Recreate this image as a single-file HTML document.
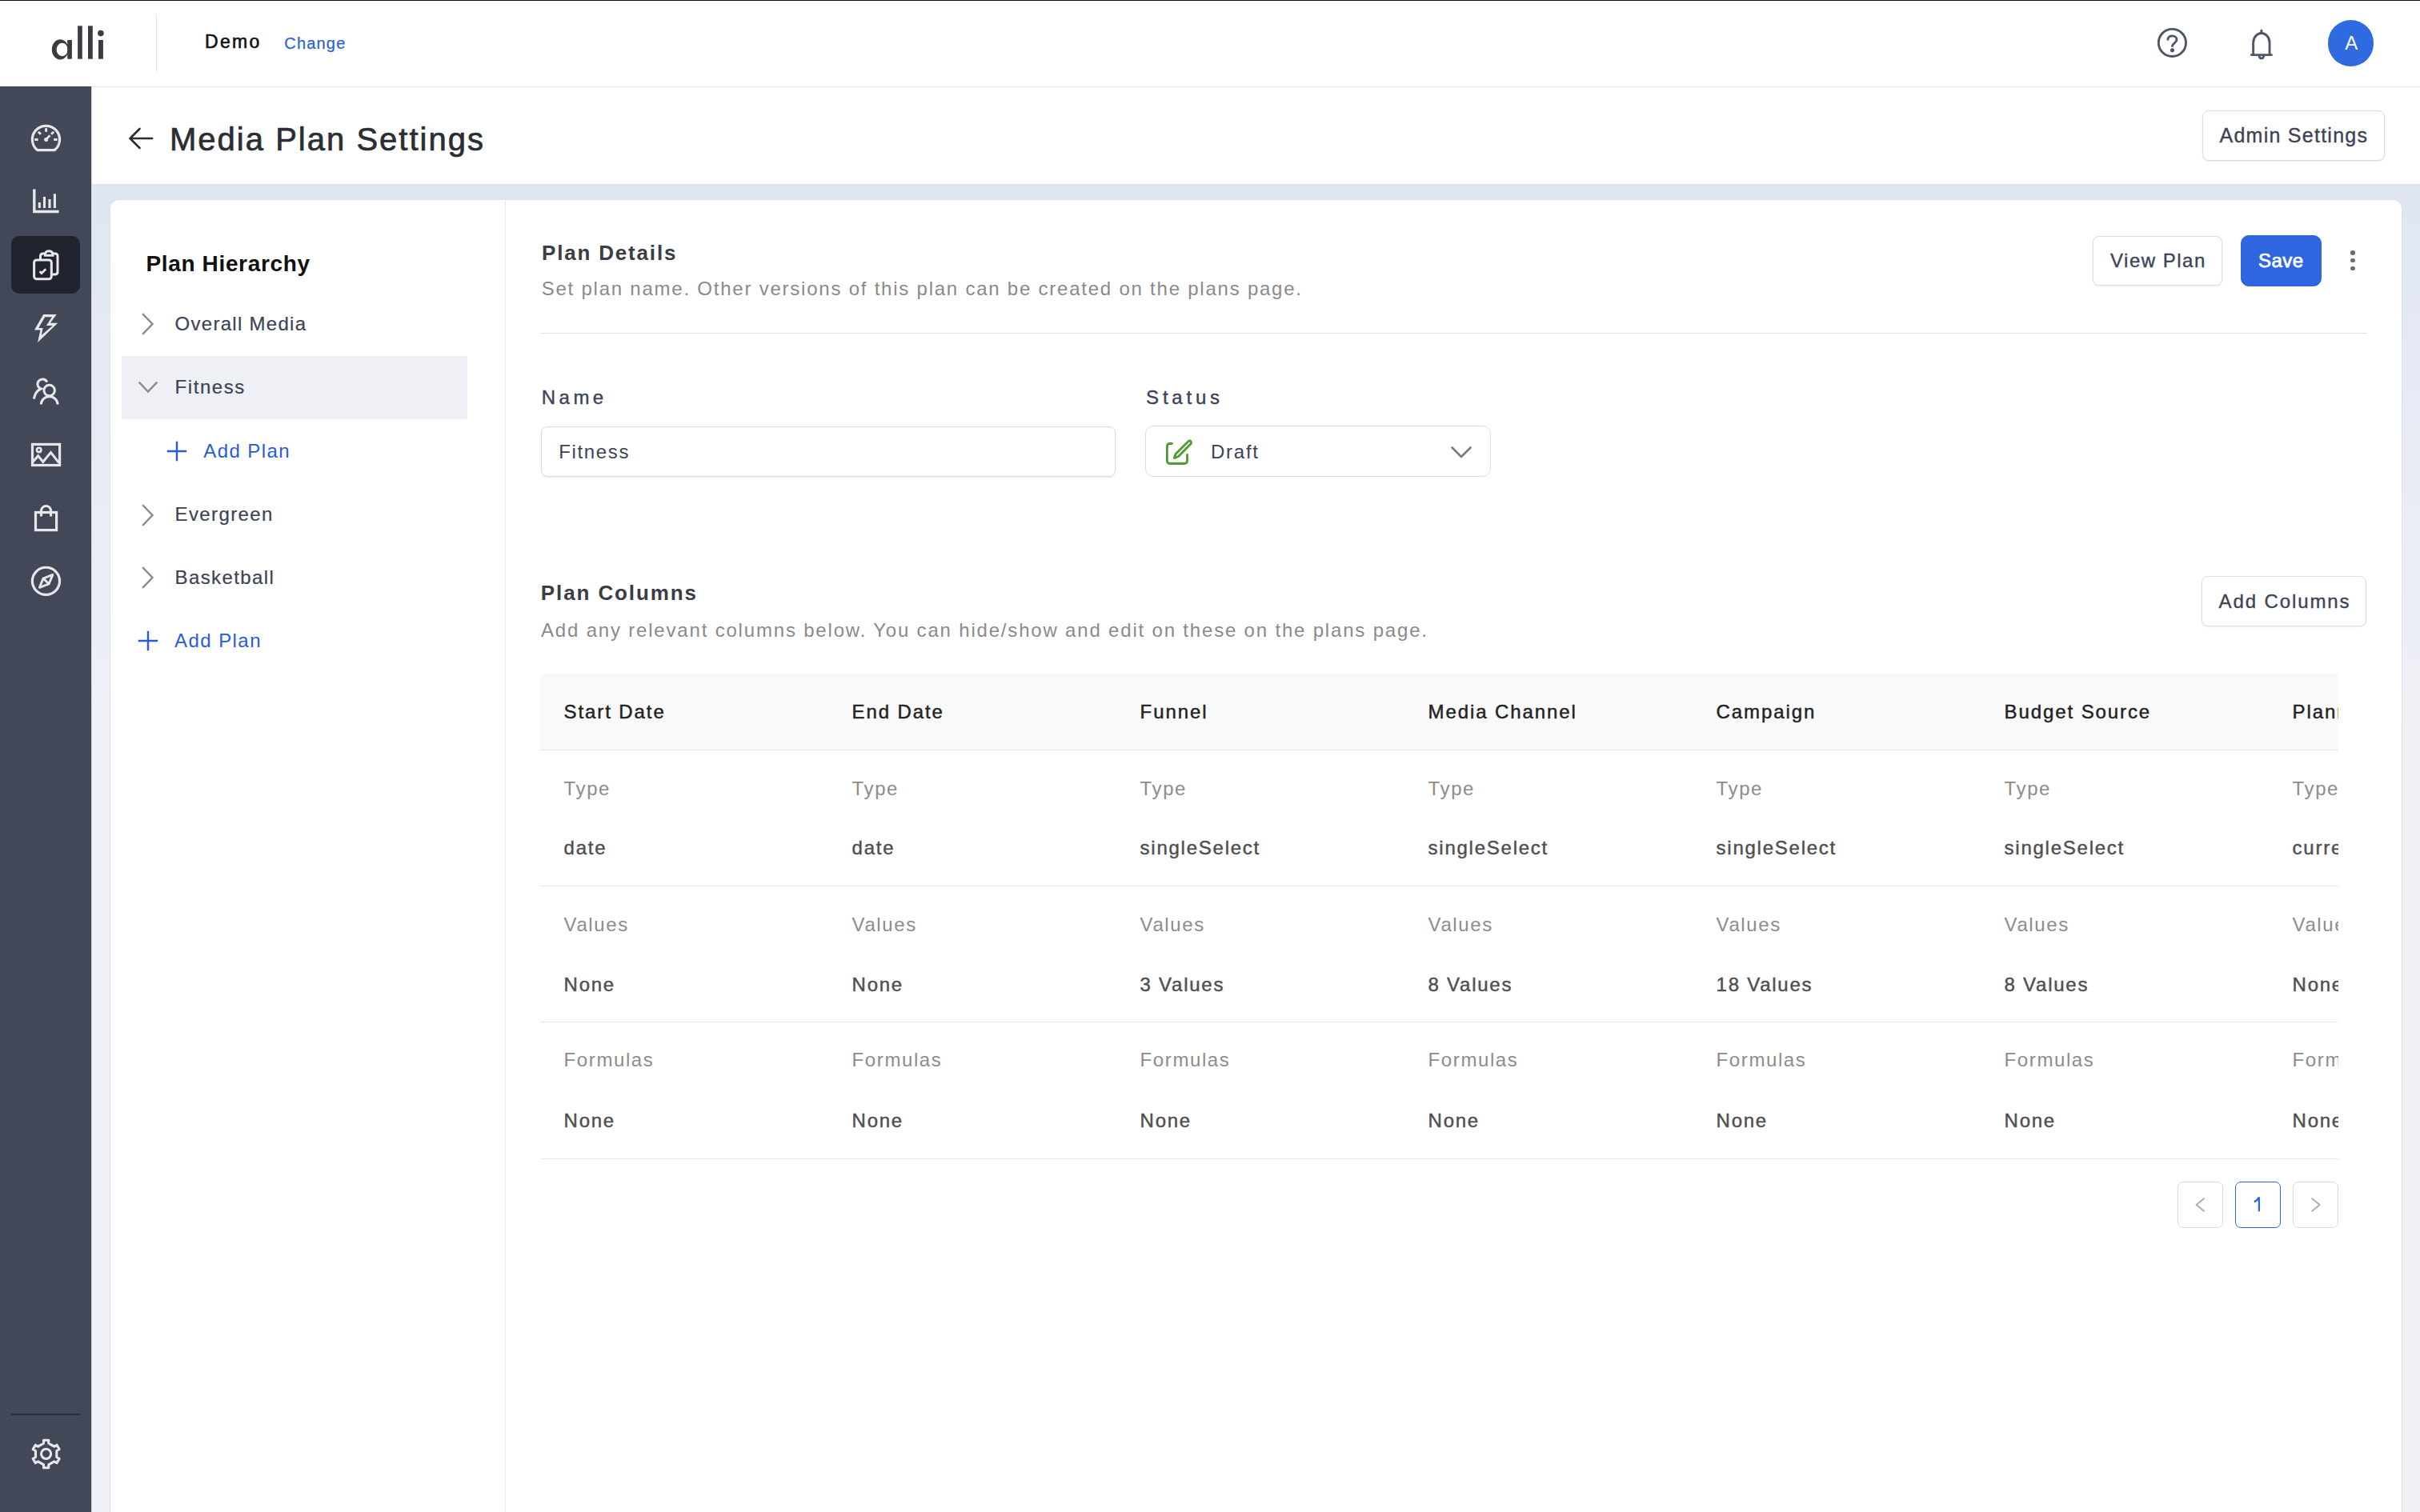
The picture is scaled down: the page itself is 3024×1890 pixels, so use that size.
<!DOCTYPE html><html><head><meta charset="utf-8"><style>
*{box-sizing:border-box;margin:0;padding:0}
html,body{width:3024px;height:1890px;overflow:hidden;background:#fff;font-family:"Liberation Sans",sans-serif}
.t{position:absolute;white-space:nowrap}
.abs{position:absolute}
svg{position:absolute;overflow:visible}
</style></head><body><div class="abs" style="left:114px;top:231px;width:2910px;height:1659px;background:linear-gradient(#dfe6f2 0px,#e6eaf4 250px,#eff1f6 700px,#eff1f6 1660px)"></div>
<div class="abs" style="left:0;top:0;width:3024px;height:109px;background:#fff;border-bottom:1px solid #e6e6e8;box-shadow:0 1px 3px rgba(0,0,0,0.05)"></div>
<div class="abs" style="left:0;top:0;width:3024px;height:1px;background:#111"></div>
<div class="abs" style="left:195px;top:18px;width:1px;height:72px;background:#e3e3e3"></div>
<div class="abs" style="left:114px;top:109px;width:2910px;height:122px;background:#fff;border-bottom:1px solid #e4e6ea"></div>
<div class="abs" style="left:0;top:108px;width:114px;height:1782px;background:#434859"></div>
<div class="abs" style="left:14px;top:295px;width:86px;height:72px;border-radius:10px;background:#21242f"></div>
<div class="abs" style="left:14px;top:1767px;width:86px;height:1.5px;background:#2c2f3b"></div>
<div class="abs" style="left:114px;top:108px;width:1px;height:1782px;background:#d5d7dc"></div>
<div class="abs" style="left:136.5px;top:249px;width:2865px;height:1700px;background:#fff;border:1px solid #dfe1e5;border-radius:12px"></div>
<div class="abs" style="left:631px;top:251px;width:1px;height:1639px;background:#e8e9ec"></div>
<div class="abs" style="left:152px;top:445px;width:432px;height:79px;background:#eff0f5"></div>
<div class="t" style="left:255.90px;top:41.43px;font-size:23px;line-height:23px;color:#111;letter-spacing:2.383px;-webkit-text-stroke:0.6px #111;">Demo</div>
<div class="t" style="left:355.30px;top:43.97px;font-size:20px;line-height:20px;color:#2b63d9;letter-spacing:1.190px;-webkit-text-stroke:0.25px #2b63d9;">Change</div>
<div class="t" style="left:212.00px;top:154.14px;font-size:40px;line-height:40px;color:#2b2d33;letter-spacing:2.014px;-webkit-text-stroke:0.7px #2b2d33;">Media Plan Settings</div>
<div class="t" style="left:182.40px;top:316.30px;font-size:28px;line-height:28px;color:#111;letter-spacing:0.654px;font-weight:700;">Plan Hierarchy</div>
<div class="t" style="left:218.50px;top:392.98px;font-size:24px;line-height:24px;color:#3c4257;letter-spacing:1.287px;-webkit-text-stroke:0.2px #3c4257;">Overall Media</div>
<div class="t" style="left:218.50px;top:471.68px;font-size:24px;line-height:24px;color:#3c4257;letter-spacing:1.575px;-webkit-text-stroke:0.2px #3c4257;">Fitness</div>
<div class="t" style="left:218.50px;top:630.98px;font-size:24px;line-height:24px;color:#3c4257;letter-spacing:1.400px;-webkit-text-stroke:0.2px #3c4257;">Evergreen</div>
<div class="t" style="left:218.50px;top:709.88px;font-size:24px;line-height:24px;color:#3c4257;letter-spacing:1.400px;-webkit-text-stroke:0.2px #3c4257;">Basketball</div>
<div class="t" style="left:254.30px;top:552.08px;font-size:24px;line-height:24px;color:#2a5bd7;letter-spacing:1.400px;">Add Plan</div>
<div class="t" style="left:218.00px;top:788.98px;font-size:24px;line-height:24px;color:#2a5bd7;letter-spacing:1.443px;">Add Plan</div>
<div class="t" style="left:677.00px;top:302.99px;font-size:26px;line-height:26px;color:#3a3d45;letter-spacing:1.818px;font-weight:700;">Plan Details</div>
<div class="t" style="left:676.70px;top:349.48px;font-size:24px;line-height:24px;color:#8a8a8a;letter-spacing:1.771px;">Set plan name. Other versions of this plan can be created on the plans page.</div>
<div class="t" style="left:676.80px;top:485.48px;font-size:24px;line-height:24px;color:#3c4257;letter-spacing:4.467px;-webkit-text-stroke:0.4px #3c4257;">Name</div>
<div class="t" style="left:1432.10px;top:484.98px;font-size:24px;line-height:24px;color:#3c4257;letter-spacing:4.790px;-webkit-text-stroke:0.4px #3c4257;">Status</div>
<div class="t" style="left:675.80px;top:727.99px;font-size:26px;line-height:26px;color:#3a3d45;letter-spacing:1.895px;font-weight:700;">Plan Columns</div>
<div class="t" style="left:676.00px;top:776.18px;font-size:24px;line-height:24px;color:#8a8a8a;letter-spacing:1.815px;">Add any relevant columns below. You can hide/show and edit on these on the plans page.</div>
<svg style="left:0;top:0" width="200" height="100" viewBox="0 0 200 100"><path fill="#3b3c41" fill-rule="evenodd" d="M75.2 49.3 A10.4 12.55 0 1 0 75.2 74.4 A10.4 12.55 0 1 0 75.2 49.3 Z M77.7 53.8 A7.1 8.2 0 1 1 77.7 70.2 A7.1 8.2 0 1 1 77.7 53.8 Z"/><rect x="84.2" y="50" width="5.7" height="23.7" fill="#3b3c41"/><rect x="97.1" y="32.3" width="5.7" height="41.4" fill="#3b3c41"/><rect x="110" y="32.3" width="5.8" height="41.4" fill="#3b3c41"/><rect x="123" y="50" width="5.9" height="23.7" fill="#3b3c41"/><circle cx="125.9" cy="41.6" r="3.8" fill="#3b3c41"/></svg>
<svg style="left:2690px;top:25px" width="160" height="60" viewBox="0 0 160 60" fill="none" stroke="#50566a" stroke-width="2.9" stroke-linecap="round" stroke-linejoin="round"><circle cx="24.4" cy="28.45" r="17.1"/><path d="M18.9 24.3 C19.3 21.2 21.6 19.9 24.5 19.9 C27.8 19.9 30 21.9 30 24.6 C30 28.5 24.6 29 24.5 32.6"/><circle cx="24.5" cy="37.7" r="1.1" fill="#50566a"/><path d="M125.65 43.6 L125.65 28.5 A10.2 12 0 0 1 146.05 28.5 L146.05 43.6"/><path d="M123.4 43.6 L148.4 43.6"/><path d="M133.2 45.2 A2.7 2.7 0 0 0 138.6 45.2"/><path d="M135.9 13.2 L135.9 16.4"/></svg>
<div class="abs" style="left:2908.5px;top:25px;width:57.5px;height:57.5px;border-radius:50%;background:#2f6ae0"></div>
<div class="t" style="left:2930.20px;top:41.88px;font-size:24px;line-height:24px;color:#fff;letter-spacing:0.000px;">A</div>
<svg style="left:150px;top:150px" width="50" height="50" viewBox="0 0 50 50" fill="none" stroke="#2b2d33" stroke-width="2.6" stroke-linecap="round" stroke-linejoin="round"><path d="M12.5 23 L40.2 23 M24.5 11 L12.5 23 L24.5 35"/></svg>
<div class="abs" style="left:2752px;top:137.5px;width:228px;height:63px;border-radius:8px;background:#fff;border:1px solid #dcdde1;box-shadow:0 1px 2px rgba(0,0,0,0.08);"></div>
<div class="t" style="left:2773.50px;top:156.64px;font-size:25px;line-height:25px;color:#3c4257;letter-spacing:1.258px;-webkit-text-stroke:0.35px #3c4257;">Admin Settings</div>
<div class="abs" style="left:2615px;top:294.5px;width:162px;height:62.5px;border-radius:8px;background:#fff;border:1px solid #dcdde1;box-shadow:0 1px 2px rgba(0,0,0,0.08);"></div>
<div class="t" style="left:2637.00px;top:313.88px;font-size:24px;line-height:24px;color:#3c4257;letter-spacing:1.500px;-webkit-text-stroke:0.35px #3c4257;">View Plan</div>
<div class="abs" style="left:2800px;top:294px;width:100.5px;height:63.5px;border-radius:10px;background:#2f66e0;border:1px solid #2f66e0;"></div>
<div class="t" style="left:2822.00px;top:313.88px;font-size:24px;line-height:24px;color:#fff;letter-spacing:0.433px;-webkit-text-stroke:0.75px #fff;">Save</div>
<div class="abs" style="left:2937.25px;top:313.09999999999997px;width:5.6px;height:5.6px;border-radius:50%;background:#6b6b6b"></div>
<div class="abs" style="left:2937.25px;top:322.9px;width:5.6px;height:5.6px;border-radius:50%;background:#6b6b6b"></div>
<div class="abs" style="left:2937.25px;top:332.7px;width:5.6px;height:5.6px;border-radius:50%;background:#6b6b6b"></div>
<div class="abs" style="left:675px;top:416px;width:2283px;height:1px;background:#e3e4e7"></div>
<div class="abs" style="left:676px;top:533px;width:718px;height:63px;border-radius:8px;background:#fff;border:1px solid #dcdcdf;box-shadow:0 1px 2px rgba(0,0,0,0.08);"></div>
<div class="t" style="left:698.20px;top:553.08px;font-size:24px;line-height:24px;color:#3c4257;letter-spacing:1.642px;">Fitness</div>
<div class="abs" style="left:1431.3px;top:532.2px;width:431.4px;height:64.3px;border-radius:10px;background:#fff;border:1px solid #dcdcdf;"></div>
<div class="t" style="left:1513.00px;top:552.88px;font-size:24px;line-height:24px;color:#3c4257;letter-spacing:1.750px;">Draft</div>
<svg style="left:1450px;top:545px" width="45" height="40" viewBox="0 0 45 40" fill="none" stroke="#4a9e2f" stroke-width="2.8" stroke-linecap="round" stroke-linejoin="round"><path d="M14.5 9.5 L12.2 9.5 Q8.4 9.5 8.4 13.3 L8.4 30.7 Q8.4 34.5 12.2 34.5 L29.7 34.5 Q33.5 34.5 33.5 30.7 L33.5 23.5"/><path d="M35.4 6.2 Q37.6 5.3 38.3 7.5 Q38.9 9.4 37.3 10.6 L22.6 25.5 L17.2 27.6 L19.2 22.2 Z"/></svg>
<svg style="left:1805px;top:550px" width="40" height="30" viewBox="0 0 40 30" fill="none" stroke="#7a7a7a" stroke-width="2.6" stroke-linecap="round" stroke-linejoin="round"><path d="M9.5 9.5 L21 21 L32.5 9.5"/></svg>
<div class="abs" style="left:2751px;top:719.6px;width:206px;height:63px;border-radius:8px;background:#fff;border:1px solid #dcdde1;box-shadow:0 1px 2px rgba(0,0,0,0.08);"></div>
<div class="t" style="left:2772.60px;top:740.08px;font-size:24px;line-height:24px;color:#3c4257;letter-spacing:1.885px;-webkit-text-stroke:0.35px #3c4257;">Add Columns</div>
<svg style="left:175px;top:389.1px" width="30" height="40" viewBox="0 0 30 40" fill="none" stroke="#8a8a8a" stroke-width="2.4" stroke-linecap="square"><path d="M4 4 L15.5 16 L4 28"/></svg>
<svg style="left:175px;top:627.7px" width="30" height="40" viewBox="0 0 30 40" fill="none" stroke="#8a8a8a" stroke-width="2.4" stroke-linecap="square"><path d="M4 4 L15.5 16 L4 28"/></svg>
<svg style="left:175px;top:706.2px" width="30" height="40" viewBox="0 0 30 40" fill="none" stroke="#8a8a8a" stroke-width="2.4" stroke-linecap="square"><path d="M4 4 L15.5 16 L4 28"/></svg>
<svg style="left:170px;top:470px" width="40" height="30" viewBox="0 0 40 30" fill="none" stroke="#8a8a8a" stroke-width="2.4" stroke-linecap="square"><path d="M4.5 8.5 L15 19.5 L25.5 8.5"/></svg>
<svg style="left:205.9px;top:548.8px" width="30" height="30" viewBox="0 0 30 30" fill="none" stroke="#2a5bd7" stroke-width="2.4"><path d="M15 2.8 L15 27.2 M2.8 15 L27.2 15"/></svg>
<svg style="left:169.9px;top:785.8px" width="30" height="30" viewBox="0 0 30 30" fill="none" stroke="#2a5bd7" stroke-width="2.4"><path d="M15 2.8 L15 27.2 M2.8 15 L27.2 15"/></svg>
<div class="abs" style="left:675px;top:842px;width:2247px;height:96px;background:#f9f9f9;border-radius:6px 0 0 0;border-bottom:1px solid #e5e5e5"></div>
<div class="abs" style="left:675px;top:1107px;width:2247px;height:1px;background:#e8e8e8"></div>
<div class="abs" style="left:675px;top:1277px;width:2247px;height:1px;background:#e8e8e8"></div>
<div class="abs" style="left:675px;top:1448px;width:2247px;height:1px;background:#e8e8e8"></div>
<div class="abs" style="left:675px;top:840px;width:2247px;height:620px;overflow:hidden"><div class="t" style="margin-left:-675px;margin-top:-840px;left:704.60px;top:877.68px;font-size:24px;line-height:24px;color:#222;letter-spacing:1.900px;-webkit-text-stroke:0.45px #222;">Start Date</div>
<div class="t" style="margin-left:-675px;margin-top:-840px;left:704.60px;top:973.98px;font-size:24px;line-height:24px;color:#8c8c8c;letter-spacing:1.600px;">Type</div>
<div class="t" style="margin-left:-675px;margin-top:-840px;left:704.60px;top:1047.98px;font-size:24px;line-height:24px;color:#4f4f4f;letter-spacing:1.750px;-webkit-text-stroke:0.45px #4f4f4f;">date</div>
<div class="t" style="margin-left:-675px;margin-top:-840px;left:704.60px;top:1143.88px;font-size:24px;line-height:24px;color:#8c8c8c;letter-spacing:1.600px;">Values</div>
<div class="t" style="margin-left:-675px;margin-top:-840px;left:704.60px;top:1218.88px;font-size:24px;line-height:24px;color:#4f4f4f;letter-spacing:1.750px;-webkit-text-stroke:0.45px #4f4f4f;">None</div>
<div class="t" style="margin-left:-675px;margin-top:-840px;left:704.60px;top:1313.38px;font-size:24px;line-height:24px;color:#8c8c8c;letter-spacing:1.600px;">Formulas</div>
<div class="t" style="margin-left:-675px;margin-top:-840px;left:704.60px;top:1389.08px;font-size:24px;line-height:24px;color:#4f4f4f;letter-spacing:1.750px;-webkit-text-stroke:0.45px #4f4f4f;">None</div>
<div class="t" style="margin-left:-675px;margin-top:-840px;left:1064.60px;top:877.68px;font-size:24px;line-height:24px;color:#222;letter-spacing:1.900px;-webkit-text-stroke:0.45px #222;">End Date</div>
<div class="t" style="margin-left:-675px;margin-top:-840px;left:1064.60px;top:973.98px;font-size:24px;line-height:24px;color:#8c8c8c;letter-spacing:1.600px;">Type</div>
<div class="t" style="margin-left:-675px;margin-top:-840px;left:1064.60px;top:1047.98px;font-size:24px;line-height:24px;color:#4f4f4f;letter-spacing:1.750px;-webkit-text-stroke:0.45px #4f4f4f;">date</div>
<div class="t" style="margin-left:-675px;margin-top:-840px;left:1064.60px;top:1143.88px;font-size:24px;line-height:24px;color:#8c8c8c;letter-spacing:1.600px;">Values</div>
<div class="t" style="margin-left:-675px;margin-top:-840px;left:1064.60px;top:1218.88px;font-size:24px;line-height:24px;color:#4f4f4f;letter-spacing:1.750px;-webkit-text-stroke:0.45px #4f4f4f;">None</div>
<div class="t" style="margin-left:-675px;margin-top:-840px;left:1064.60px;top:1313.38px;font-size:24px;line-height:24px;color:#8c8c8c;letter-spacing:1.600px;">Formulas</div>
<div class="t" style="margin-left:-675px;margin-top:-840px;left:1064.60px;top:1389.08px;font-size:24px;line-height:24px;color:#4f4f4f;letter-spacing:1.750px;-webkit-text-stroke:0.45px #4f4f4f;">None</div>
<div class="t" style="margin-left:-675px;margin-top:-840px;left:1424.60px;top:877.68px;font-size:24px;line-height:24px;color:#222;letter-spacing:1.900px;-webkit-text-stroke:0.45px #222;">Funnel</div>
<div class="t" style="margin-left:-675px;margin-top:-840px;left:1424.60px;top:973.98px;font-size:24px;line-height:24px;color:#8c8c8c;letter-spacing:1.600px;">Type</div>
<div class="t" style="margin-left:-675px;margin-top:-840px;left:1424.60px;top:1047.98px;font-size:24px;line-height:24px;color:#4f4f4f;letter-spacing:1.750px;-webkit-text-stroke:0.45px #4f4f4f;">singleSelect</div>
<div class="t" style="margin-left:-675px;margin-top:-840px;left:1424.60px;top:1143.88px;font-size:24px;line-height:24px;color:#8c8c8c;letter-spacing:1.600px;">Values</div>
<div class="t" style="margin-left:-675px;margin-top:-840px;left:1424.60px;top:1218.88px;font-size:24px;line-height:24px;color:#4f4f4f;letter-spacing:1.750px;-webkit-text-stroke:0.45px #4f4f4f;">3 Values</div>
<div class="t" style="margin-left:-675px;margin-top:-840px;left:1424.60px;top:1313.38px;font-size:24px;line-height:24px;color:#8c8c8c;letter-spacing:1.600px;">Formulas</div>
<div class="t" style="margin-left:-675px;margin-top:-840px;left:1424.60px;top:1389.08px;font-size:24px;line-height:24px;color:#4f4f4f;letter-spacing:1.750px;-webkit-text-stroke:0.45px #4f4f4f;">None</div>
<div class="t" style="margin-left:-675px;margin-top:-840px;left:1784.60px;top:877.68px;font-size:24px;line-height:24px;color:#222;letter-spacing:1.900px;-webkit-text-stroke:0.45px #222;">Media Channel</div>
<div class="t" style="margin-left:-675px;margin-top:-840px;left:1784.60px;top:973.98px;font-size:24px;line-height:24px;color:#8c8c8c;letter-spacing:1.600px;">Type</div>
<div class="t" style="margin-left:-675px;margin-top:-840px;left:1784.60px;top:1047.98px;font-size:24px;line-height:24px;color:#4f4f4f;letter-spacing:1.750px;-webkit-text-stroke:0.45px #4f4f4f;">singleSelect</div>
<div class="t" style="margin-left:-675px;margin-top:-840px;left:1784.60px;top:1143.88px;font-size:24px;line-height:24px;color:#8c8c8c;letter-spacing:1.600px;">Values</div>
<div class="t" style="margin-left:-675px;margin-top:-840px;left:1784.60px;top:1218.88px;font-size:24px;line-height:24px;color:#4f4f4f;letter-spacing:1.750px;-webkit-text-stroke:0.45px #4f4f4f;">8 Values</div>
<div class="t" style="margin-left:-675px;margin-top:-840px;left:1784.60px;top:1313.38px;font-size:24px;line-height:24px;color:#8c8c8c;letter-spacing:1.600px;">Formulas</div>
<div class="t" style="margin-left:-675px;margin-top:-840px;left:1784.60px;top:1389.08px;font-size:24px;line-height:24px;color:#4f4f4f;letter-spacing:1.750px;-webkit-text-stroke:0.45px #4f4f4f;">None</div>
<div class="t" style="margin-left:-675px;margin-top:-840px;left:2144.60px;top:877.68px;font-size:24px;line-height:24px;color:#222;letter-spacing:1.900px;-webkit-text-stroke:0.45px #222;">Campaign</div>
<div class="t" style="margin-left:-675px;margin-top:-840px;left:2144.60px;top:973.98px;font-size:24px;line-height:24px;color:#8c8c8c;letter-spacing:1.600px;">Type</div>
<div class="t" style="margin-left:-675px;margin-top:-840px;left:2144.60px;top:1047.98px;font-size:24px;line-height:24px;color:#4f4f4f;letter-spacing:1.750px;-webkit-text-stroke:0.45px #4f4f4f;">singleSelect</div>
<div class="t" style="margin-left:-675px;margin-top:-840px;left:2144.60px;top:1143.88px;font-size:24px;line-height:24px;color:#8c8c8c;letter-spacing:1.600px;">Values</div>
<div class="t" style="margin-left:-675px;margin-top:-840px;left:2144.60px;top:1218.88px;font-size:24px;line-height:24px;color:#4f4f4f;letter-spacing:1.750px;-webkit-text-stroke:0.45px #4f4f4f;">18 Values</div>
<div class="t" style="margin-left:-675px;margin-top:-840px;left:2144.60px;top:1313.38px;font-size:24px;line-height:24px;color:#8c8c8c;letter-spacing:1.600px;">Formulas</div>
<div class="t" style="margin-left:-675px;margin-top:-840px;left:2144.60px;top:1389.08px;font-size:24px;line-height:24px;color:#4f4f4f;letter-spacing:1.750px;-webkit-text-stroke:0.45px #4f4f4f;">None</div>
<div class="t" style="margin-left:-675px;margin-top:-840px;left:2504.60px;top:877.68px;font-size:24px;line-height:24px;color:#222;letter-spacing:1.900px;-webkit-text-stroke:0.45px #222;">Budget Source</div>
<div class="t" style="margin-left:-675px;margin-top:-840px;left:2504.60px;top:973.98px;font-size:24px;line-height:24px;color:#8c8c8c;letter-spacing:1.600px;">Type</div>
<div class="t" style="margin-left:-675px;margin-top:-840px;left:2504.60px;top:1047.98px;font-size:24px;line-height:24px;color:#4f4f4f;letter-spacing:1.750px;-webkit-text-stroke:0.45px #4f4f4f;">singleSelect</div>
<div class="t" style="margin-left:-675px;margin-top:-840px;left:2504.60px;top:1143.88px;font-size:24px;line-height:24px;color:#8c8c8c;letter-spacing:1.600px;">Values</div>
<div class="t" style="margin-left:-675px;margin-top:-840px;left:2504.60px;top:1218.88px;font-size:24px;line-height:24px;color:#4f4f4f;letter-spacing:1.750px;-webkit-text-stroke:0.45px #4f4f4f;">8 Values</div>
<div class="t" style="margin-left:-675px;margin-top:-840px;left:2504.60px;top:1313.38px;font-size:24px;line-height:24px;color:#8c8c8c;letter-spacing:1.600px;">Formulas</div>
<div class="t" style="margin-left:-675px;margin-top:-840px;left:2504.60px;top:1389.08px;font-size:24px;line-height:24px;color:#4f4f4f;letter-spacing:1.750px;-webkit-text-stroke:0.45px #4f4f4f;">None</div>
<div class="t" style="margin-left:-675px;margin-top:-840px;left:2864.60px;top:877.68px;font-size:24px;line-height:24px;color:#222;letter-spacing:1.900px;-webkit-text-stroke:0.45px #222;">Planned Budget</div>
<div class="t" style="margin-left:-675px;margin-top:-840px;left:2864.60px;top:973.98px;font-size:24px;line-height:24px;color:#8c8c8c;letter-spacing:1.600px;">Type</div>
<div class="t" style="margin-left:-675px;margin-top:-840px;left:2864.60px;top:1047.98px;font-size:24px;line-height:24px;color:#4f4f4f;letter-spacing:1.750px;-webkit-text-stroke:0.45px #4f4f4f;">currency</div>
<div class="t" style="margin-left:-675px;margin-top:-840px;left:2864.60px;top:1143.88px;font-size:24px;line-height:24px;color:#8c8c8c;letter-spacing:1.600px;">Values</div>
<div class="t" style="margin-left:-675px;margin-top:-840px;left:2864.60px;top:1218.88px;font-size:24px;line-height:24px;color:#4f4f4f;letter-spacing:1.750px;-webkit-text-stroke:0.45px #4f4f4f;">None</div>
<div class="t" style="margin-left:-675px;margin-top:-840px;left:2864.60px;top:1313.38px;font-size:24px;line-height:24px;color:#8c8c8c;letter-spacing:1.600px;">Formulas</div>
<div class="t" style="margin-left:-675px;margin-top:-840px;left:2864.60px;top:1389.08px;font-size:24px;line-height:24px;color:#4f4f4f;letter-spacing:1.750px;-webkit-text-stroke:0.45px #4f4f4f;">None</div></div>
<div class="abs" style="left:2721px;top:1477px;width:57px;height:58px;border-radius:7px;background:#fff;border:1px solid #d9d9d9;"></div>
<div class="abs" style="left:2793.2px;top:1477px;width:56.8px;height:58px;border-radius:7px;background:#fff;border:1px solid #2f66e0;"></div>
<div class="abs" style="left:2865.1px;top:1477px;width:56.8px;height:58px;border-radius:7px;background:#fff;border:1px solid #d9d9d9;"></div>
<svg style="left:2800px;top:1480px" width="40" height="40" viewBox="0 0 40 40" fill="none" stroke="#2f66e0" stroke-width="2.3" stroke-linejoin="miter"><path d="M22.9 34.3 L22.9 16.4 Q21 20.4 16.9 22.4"/></svg>
<svg style="left:2721px;top:1477px" width="200" height="58" viewBox="0 0 200 58" fill="none" stroke="#ababab" stroke-width="1.8" stroke-linecap="butt"><path d="M33.6 20.8 L23.6 29 L33.6 37.2"/><path d="M167.6 20.8 L177.6 29 L167.6 37.2"/></svg>
<svg style="left:30px;top:145px" width="55" height="55" viewBox="0 0 55 55" fill="none" stroke="#e6e7eb" stroke-width="3.2" stroke-linecap="butt" stroke-linejoin="miter"><path d="M16.6 42.6 A17.1 17.1 0 1 1 38.3 42.6 Z"/><path d="M27.6 15.3 L27.6 19.8 M13.2 29.5 L17.6 29.5 M37.2 29.5 L41.6 29.5 M17.9 19.7 L20.9 22.7 M37.1 19.7 L34.1 22.7" stroke-width="3"/><path d="M27.6 29.4 L32.4 24.2" stroke-width="2.8"/><circle cx="27.6" cy="29.6" r="2.5" fill="#e6e7eb" stroke="none"/></svg>
<svg style="left:30px;top:225px" width="55" height="55" viewBox="0 0 55 55" fill="none" stroke="#e6e7eb" stroke-width="3.2" stroke-linecap="butt" stroke-linejoin="miter"><path d="M12.8 11.6 L12.8 39.5 L43.6 39.5" stroke-width="3.4"/><path d="M19.3 28 L19.3 34.9 M25.5 20.9 L25.5 34.9 M32 24 L32 34.9 M38.4 17.3 L38.4 34.9" stroke-width="3.1"/></svg>
<svg style="left:30px;top:303px" width="55" height="55" viewBox="0 0 55 55" fill="none" stroke="#e6e7eb" stroke-width="3.2" stroke-linecap="butt" stroke-linejoin="miter"><path d="M20.5 21.5 L20.5 17.2 Q20.5 14 23.7 14 L26.5 14 M36 14 L38.8 14 Q42 14 42 17.2 L42 36.8 Q42 40 38.8 40 L34.2 40" stroke-width="3"/><path d="M26.3 16.2 Q26 11 31.1 10.8 Q36.2 11 36 16.2 Z" stroke-width="3"/><rect x="12.6" y="21.9" width="21.7" height="23.9" rx="3.2" stroke-width="3"/><path d="M19.6 36.2 L22 38.6 L27.2 33.2" stroke-width="2.8"/></svg>
<svg style="left:30px;top:382px" width="55" height="55" viewBox="0 0 55 55" fill="none" stroke="#e6e7eb" stroke-width="3.2" stroke-linecap="butt" stroke-linejoin="miter"><path fill="#e6e7eb" fill-rule="evenodd" stroke="none" d="M24.2 10.9 L40.7 10.9 L32.9 21.8 L42.2 21.8 L17.1 46 L20.4 30.6 L12.9 30.6 Z M26.2 14.2 L34.9 14.2 L27.9 25.1 L35.8 25.1 L21.8 37.1 L23.6 28 L18.2 28 Z"/></svg>
<svg style="left:30px;top:462px" width="55" height="55" viewBox="0 0 55 55" fill="none" stroke="#e6e7eb" stroke-width="3.2" stroke-linecap="butt" stroke-linejoin="miter"><path d="M28.8 15.6 A6.2 6.2 0 1 0 21.1 24 Q14.2 27 12.3 36.6" stroke-width="3"/><circle cx="31.65" cy="26" r="6.75" stroke-width="3"/><path d="M21.3 43.6 A10.4 9.8 0 0 1 42.1 43.6" stroke-width="3"/></svg>
<svg style="left:30px;top:540px" width="55" height="55" viewBox="0 0 55 55" fill="none" stroke="#e6e7eb" stroke-width="3.2" stroke-linecap="butt" stroke-linejoin="miter"><rect x="10.5" y="15.4" width="34.1" height="26.1" stroke-width="3.2"/><circle cx="18.7" cy="22.4" r="2.7" stroke-width="2.6"/><path d="M10.9 37.5 L17.6 29.9 L23.8 37.3 L33.5 25.6 L43.5 38.3" stroke-width="3"/></svg>
<svg style="left:30px;top:620px" width="55" height="55" viewBox="0 0 55 55" fill="none" stroke="#e6e7eb" stroke-width="3.2" stroke-linecap="butt" stroke-linejoin="miter"><rect x="14.5" y="20.5" width="26.1" height="22.1" stroke-width="3.2"/><path d="M21.5 25.5 L21.5 18.5 A6.05 6.05 0 0 1 33.6 18.5 L33.6 25.5" stroke-width="3.1"/></svg>
<svg style="left:30px;top:699px" width="55" height="55" viewBox="0 0 55 55" fill="none" stroke="#e6e7eb" stroke-width="3.2" stroke-linecap="butt" stroke-linejoin="miter"><circle cx="27.45" cy="27.35" r="17.1" stroke-width="3.2"/><path d="M19.4 35.3 L24 24.1 L35.9 19.4 L31.2 30.8 Z M24 24.1 L31.2 30.8" stroke-width="2.9" stroke-linejoin="round"/></svg>
<svg style="left:30px;top:1790px" width="55" height="55" viewBox="0 0 55 55" fill="none" stroke="#e6e7eb" stroke-width="3.1" stroke-linejoin="round"><path d="M24.55 14.09 L24.55 10.30 L30.75 10.30 L30.75 14.09 L37.71 18.11 L41.00 16.22 L44.10 21.58 L40.81 23.48 L40.81 31.52 L44.10 33.42 L41.00 38.78 L37.71 36.89 L30.75 40.91 L30.75 44.70 L24.55 44.70 L24.55 40.91 L17.59 36.89 L14.30 38.78 L11.20 33.42 L14.49 31.52 L14.49 23.48 L11.20 21.58 L14.30 16.22 L17.59 18.11 Z"/><circle cx="27.6" cy="27.3" r="6.1" stroke-width="3"/></svg><script>(function(){var w=window.innerWidth;if(w&&Math.abs(w-3024)>2){var z=w/3024;document.documentElement.style.zoom=z;}})();</script></body></html>
